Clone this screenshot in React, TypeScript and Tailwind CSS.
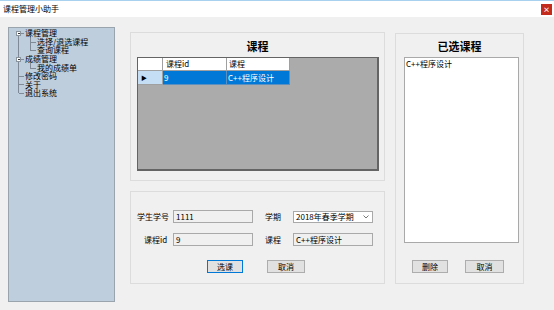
import React from 'react';

const FONT = { fontFamily: '"Noto Sans CJK SC", "Liberation Sans", sans-serif' };

const TREE_ROWS = [
    { text: '课程管理', indent: 16 },
    { text: '选择/退选课程', indent: 28 },
    { text: '查询课程', indent: 28 },
    { text: '成绩管理', indent: 16 },
    { text: '我的成绩单', indent: 28 },
    { text: '修改密码', indent: 16 },
    { text: '关于', indent: 16 },
    { text: '退出系统', indent: 16 },
];

const TreeLines: React.FC = () => (
    <svg className="absolute left-0 top-0" width="107" height="80" viewBox="0 0 107 80">
        <g stroke="#7f8a96" strokeWidth="1" fill="none" shapeRendering="crispEdges">
            <line x1="9.5" y1="8" x2="9.5" y2="65" />
            <line x1="12" y1="5.5" x2="15" y2="5.5" />
            <line x1="12" y1="31.5" x2="15" y2="31.5" />
            <line x1="9.5" y1="48.5" x2="15" y2="48.5" />
            <line x1="9.5" y1="56.5" x2="15" y2="56.5" />
            <line x1="9.5" y1="65" x2="15" y2="65" />
            <line x1="21.5" y1="8" x2="21.5" y2="22.5" />
            <line x1="21.5" y1="14.5" x2="27" y2="14.5" />
            <line x1="21.5" y1="22.5" x2="27" y2="22.5" />
            <line x1="21.5" y1="34" x2="21.5" y2="40.5" />
            <line x1="21.5" y1="40.5" x2="27" y2="40.5" />
        </g>
        <g stroke="#8a949e" strokeWidth="1" shapeRendering="crispEdges">
            <rect x="7.5" y="3.5" width="4" height="4" fill="#ffffff" />
            <line x1="8.5" y1="5.5" x2="11" y2="5.5" stroke="#333" />
            <rect x="7.5" y="29.5" width="4" height="4" fill="#ffffff" />
            <line x1="8.5" y1="31.5" x2="11" y2="31.5" stroke="#333" />
        </g>
    </svg>
);

const WinButton: React.FC<{ label: string; width: string; focused?: boolean }> = ({ label, width, focused }) => (
    <div
        className={`${width} h-[13px] flex items-center justify-center text-[8px] text-black bg-[#e1e1e1] border ${
            focused ? 'border-[#0078d7]' : 'border-[#adadad]'
        }`}
    >
        {label}
    </div>
);

const TextBox: React.FC<{ value: string }> = ({ value }) => (
    <div className="w-[80px] h-[13px] bg-[#f0f0f0] border border-[#a9a9a9] flex items-center pl-[2px] text-[8px] text-black leading-none">
        {value}
    </div>
);

export default function App() {
    return (
        <div className="w-[554px] h-[310px] bg-[#f0f0f0] overflow-hidden text-black" style={FONT}>
            {/* Title bar */}
            <div className="h-[17px] bg-white border-t border-[#a8d1f0] flex items-center justify-between">
                <span className="pl-[3px] text-[8px] leading-none">课程管理小助手</span>
                <div className="mr-[2px] w-[11px] h-[11px] bg-[#c42b1c] flex items-center justify-center text-white text-[7px] leading-none font-bold">
                    ×
                </div>
            </div>

            <div className="flex pl-[8px] pt-[10px]">
                {/* Tree */}
                <div className="relative w-[107px] h-[275px] bg-[#bfcedc] border border-[#9aa4ad]">
                    <TreeLines />
                    <div className="relative pt-[1px]">
                        {TREE_ROWS.map(row => (
                            <div
                                key={row.text}
                                className="h-[8.57px] flex items-center text-[8px] leading-none whitespace-nowrap"
                                style={{ paddingLeft: row.indent }}
                            >
                                {row.text}
                            </div>
                        ))}
                    </div>
                </div>

                {/* Middle column */}
                <div className="ml-[15px] mt-[5px] flex flex-col">
                    <div className="w-[255px] h-[149px] border border-[#dcdcdc] flex flex-col">
                        <div className="h-[24px] flex items-center justify-center text-[11px] font-bold leading-none pt-[2px]">课程</div>
                        <div className="ml-[6px] w-[242px] h-[114px] bg-[#ababab] border border-[#646464] border-b-2 border-r-2">
                            <div className="flex h-[13px] text-[8px] leading-none">
                                <div className="w-[25px] bg-white border-r border-b border-[#a0a0a0]" />
                                <div className="w-[64px] bg-white border-r border-b border-[#a0a0a0] flex items-center pl-[3px]">课程id</div>
                                <div className="w-[63px] bg-white border-r border-b border-[#a0a0a0] flex items-center pl-[2px]">课程</div>
                            </div>
                            <div className="flex h-[14px] text-[8px] leading-none">
                                <div className="w-[25px] bg-[#c6def3] border-r border-b border-[#a0a0a0] flex items-center pl-[3px] text-[6px]">▶</div>
                                <div className="w-[64px] bg-[#0078d7] text-white border-r border-b border-[#5a8fbf] flex items-center pl-[1px]">9</div>
                                <div className="w-[63px] bg-[#0078d7] text-white border-r border-b border-[#5a8fbf] flex items-center pl-[1px]">C++程序设计</div>
                            </div>
                        </div>
                    </div>

                    <div className="mt-[10px] w-[255px] h-[93px] border border-[#dcdcdc] pt-[18px] text-[8px] leading-none">
                        <div className="flex items-center">
                            <div className="w-[42px] pl-[6px]">学生学号</div>
                            <TextBox value="1111" />
                            <div className="w-[40px] pl-[12px]">学期</div>
                            <div className="w-[80px] h-[12px] bg-white border border-[#a9a9a9] flex items-center justify-between pl-[2px] pr-[3px]">
                                <span>2018年春季学期</span>
                                <svg width="6" height="4" viewBox="0 0 6 4">
                                    <path d="M0.5 0.5 L3 3 L5.5 0.5" stroke="#555" fill="none" strokeWidth="0.8" />
                                </svg>
                            </div>
                        </div>
                        <div className="flex items-center mt-[10px]">
                            <div className="w-[42px] pl-[13px]">课程id</div>
                            <TextBox value="9" />
                            <div className="w-[40px] pl-[12px]">课程</div>
                            <TextBox value="C++程序设计" />
                        </div>
                        <div className="flex mt-[14px]">
                            <div className="ml-[76px]">
                                <WinButton label="选课" width="w-[36px]" focused />
                            </div>
                            <div className="ml-[24px]">
                                <WinButton label="取消" width="w-[38px]" />
                            </div>
                        </div>
                    </div>
                </div>

                {/* Right column */}
                <div className="ml-[10px] mt-[6px] w-[129px] h-[251px] border border-[#dcdcdc] flex flex-col">
                    <div className="h-[23px] flex items-center justify-center text-[11px] font-bold leading-none pt-[1px]">已选课程</div>
                    <div className="ml-[8px] w-[115px] h-[186px] bg-white border border-[#a9a9a9] text-[8px] leading-none pl-[1px] pt-[2px]">
                        C++程序设计
                    </div>
                    <div className="flex mt-[17px]">
                        <div className="ml-[16px]">
                            <WinButton label="删除" width="w-[36px]" />
                        </div>
                        <div className="ml-[17px]">
                            <WinButton label="取消" width="w-[39px]" />
                        </div>
                    </div>
                </div>
            </div>
        </div>
    );
}
